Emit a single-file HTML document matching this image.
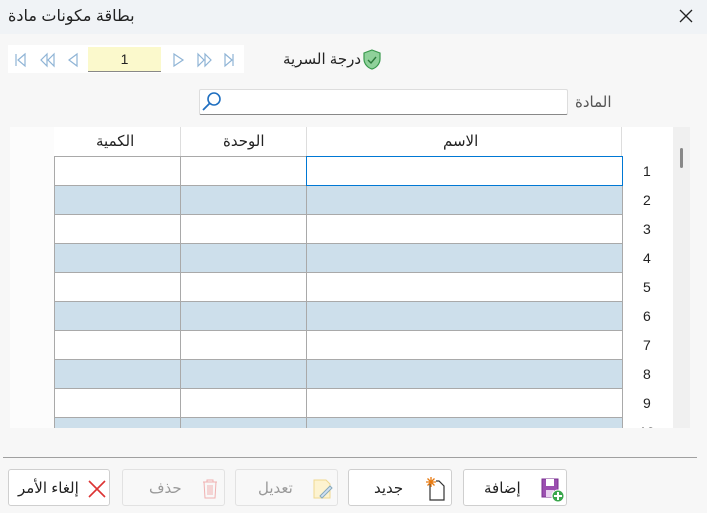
<!DOCTYPE html>
<html><head><meta charset="utf-8"><style>
*{box-sizing:border-box;margin:0;padding:0}
body{width:707px;height:513px;background:#f7f7f7;font-family:"Liberation Sans","DejaVu Sans",sans-serif;position:relative;overflow:hidden;font-size:15px;color:#222}
.a{position:absolute}
.title{left:0;top:0;width:707px;height:34px;background:#f0f3f6}
.t{white-space:nowrap}
.btn{position:absolute;top:469px;height:37px;background:#fff;border:1px solid #cfcfcf;border-radius:3px}
.btn span{position:absolute;top:9px;font-size:15px}
.dis{border-color:#e2e2e2;background:#f8f8f8}
.dis span{color:#999}
</style></head><body>
<div class="a title"></div>
<div class="a t" style="left:8px;top:6px;font-size:16px;direction:rtl;">بطاقة مكونات مادة</div>
<svg class="a" style="left:679px;top:9px" width="14" height="14"><path d="M1 1L13 13M13 1L1 13" stroke="#222" stroke-width="1.3"/></svg>

<div class="a" style="left:8px;top:45px;width:236px;height:28px;background:#fff"></div>
<svg class="a" style="left:14px;top:52px" width="230" height="16">
<g fill="none" stroke="#8fb4d6" stroke-width="1.2">
<path d="M2 2V14M11 2L4 8L11 14Z"/>
<path d="M33 2L27 8L33 14ZM40 2L34 8L40 14Z"/>
<path d="M63 2L55 8L63 14Z"/>
<path d="M160 2L169 8L160 14Z"/>
<path d="M184 2L190 8L184 14ZM191 2L197 8L191 14Z"/>
<path d="M211 2L218 8L211 14ZM219 2V14"/>
</g></svg>
<div class="a" style="left:88px;top:47px;width:73px;height:25px;background:#fbf9cc;border-bottom:1px solid #888;text-align:center;line-height:24px;font-size:14px">1</div>

<svg class="a" style="left:362px;top:49px" width="20" height="22"><path d="M10 1L18 4V10C18 15 14 19 10 20C6 19 2 15 2 10V4Z" fill="#8fd19a" stroke="#3a9a4e" stroke-width="1.2"/><path d="M6 11L9 14L14 8" fill="none" stroke="#2c7a3c" stroke-width="1.4"/></svg>
<div class="a t" style="left:283px;top:50px;direction:rtl">درجة السرية</div>

<div class="a" style="left:199px;top:89px;width:369px;height:26px;background:#fff;border:1px solid #ddd;border-bottom:1px solid #888;border-radius:2px"></div>
<svg class="a" style="left:201px;top:91px" width="22" height="22"><circle cx="13" cy="8" r="6" fill="none" stroke="#1f6fc0" stroke-width="1.6"/><path d="M9 12L2 19" stroke="#1f6fc0" stroke-width="1.8"/></svg>
<div class="a t" style="left:575px;top:93px;direction:rtl;color:#555">المادة</div>

<div class="a" style="left:10px;top:127px;width:680px;height:301px;background:#fcfcfc;overflow:hidden">
<div class="a" style="left:663px;top:0;width:17px;height:301px;background:#f0f0f0"></div>
<div class="a" style="left:670px;top:21px;width:3px;height:20px;background:#888;border-radius:2px"></div>
<div class="a" style="left:612px;top:0;width:51px;height:301px;background:#fff"></div>
<div class="a" style="left:44px;top:0;width:568px;height:29px;background:#fff;border-right:1px solid #ddd"></div>
<div class="a" style="left:170px;top:0;width:1px;height:29px;background:#ddd"></div>
<div class="a" style="left:296px;top:0;width:1px;height:29px;background:#ddd"></div>
<div class="a t" style="left:86px;top:5px;direction:rtl">الكمية</div>
<div class="a t" style="left:213px;top:5px;direction:rtl">الوحدة</div>
<div class="a t" style="left:433px;top:5px;direction:rtl">الاسم</div>
<div id="rows"></div>
</div>

<div class="a" style="left:3px;top:457px;width:694px;height:1px;background:#a0a0a0"></div>

<div class="btn" style="left:8px;width:102px"><span style="left:9px;direction:rtl">إلغاء الأمر</span>
<svg class="a" style="left:78px;top:9px" width="20" height="20"><path d="M2 2L18 18M18 2L2 18" stroke="#d33" stroke-width="1.6"/></svg></div>
<div class="btn dis" style="left:122px;width:103px"><span style="left:26px">حذف</span>
<svg class="a" style="left:78px;top:8px" width="18" height="22"><path d="M2 4H16M6 4V2H12V4M3 4L4 20H14L15 4M7 7V17M9 7V17M11 7V17" fill="none" stroke="#f0b0b0" stroke-width="1"/></svg></div>
<div class="btn dis" style="left:235px;width:103px"><span style="left:22px">تعديل</span>
<svg class="a" style="left:76px;top:8px" width="22" height="22"><path d="M2 2H14L18 6V20H2Z" fill="#fdf3d0" stroke="#f0d890"/><path d="M8 18L18 8L20 10L10 20Z" fill="#cfe0f5" stroke="#8ab"/></svg></div>
<div class="btn" style="left:348px;width:104px"><span style="left:25px">جديد</span>
<svg class="a" style="left:75px;top:6px" width="24" height="26"><path d="M6 8V24H20V10L15 5H12" fill="none" stroke="#333" stroke-width="1.2"/><path d="M7 1V11M2 6H12M3.5 2.5L10.5 9.5M10.5 2.5L3.5 9.5" stroke="#e87a10" stroke-width="1.3"/></svg></div>
<div class="btn" style="left:463px;width:104px"><span style="left:20px">إضافة</span>
<svg class="a" style="left:76px;top:7px" width="26" height="26"><path d="M2 2H18V20H2Z" fill="#9b4fb0" stroke="#7a2f90"/><rect x="6" y="2" width="8" height="7" fill="#fff"/><rect x="6" y="13" width="8" height="7" fill="#e9d0f0"/><circle cx="18" cy="19" r="6" fill="#3aa64c" stroke="#fff"/><path d="M18 15V23M14 19H22" stroke="#fff" stroke-width="2"/></svg></div>

<script>
var h='';for(var i=0;i<10;i++){var y=29+i*29;var bg=i%2?'#cddfeb':'#fff';
h+='<div class="a" style="left:44px;top:'+y+'px;width:569px;height:30px;background:'+bg+';border:1px solid #a9a9a9"></div>';
h+='<div class="a" style="left:170px;top:'+y+'px;width:1px;height:30px;background:#a9a9a9"></div>';
h+='<div class="a" style="left:296px;top:'+y+'px;width:1px;height:30px;background:#a9a9a9"></div>';
h+='<div class="a" style="left:'+(i==9?629:633)+'px;top:'+(y+7)+'px;font-size:14px">'+(i+1)+'</div>';}
h+='<div class="a" style="left:296px;top:29px;width:317px;height:30px;border:1.5px solid #0078d4;background:#fff"></div>';
document.getElementById('rows').innerHTML=h;
</script>
</body></html>
